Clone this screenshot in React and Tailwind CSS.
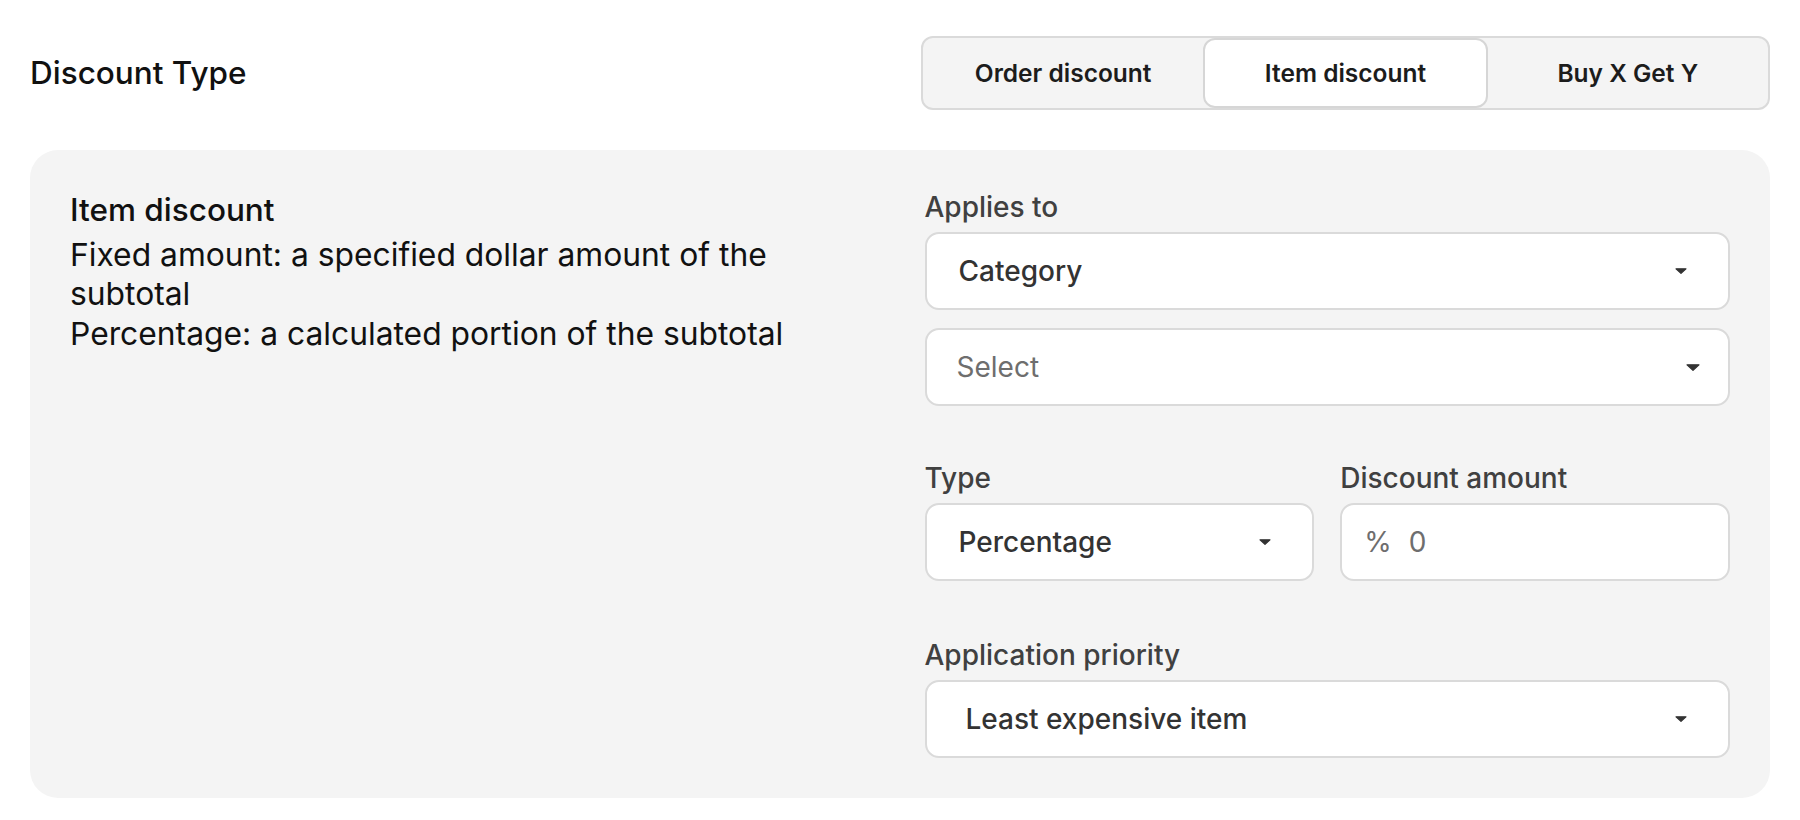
import React, { useState } from 'react';

const Caret = ({ w = 12, h = 6 }) => (
    <svg width={w} height={h} viewBox={`0 0 ${w} ${h}`} className="shrink-0">
        <path d={`M1 0.8 L${w - 1} 0.8 L${w / 2} ${h - 0.6} Z`} fill="#333333" stroke="#333333" strokeWidth="1.2" strokeLinejoin="round" />
    </svg>
);

const SelectBox = ({ value, placeholder, className = '', caret = 'sm' }) => (
    <div className={`flex h-[78px] items-center justify-between rounded-[14px] border-2 border-[#dadada] bg-white ${className}`}>
        {value ? (
            <span className="text-[28px] font-medium text-[#333333]">{value}</span>
        ) : (
            <span className="text-[28px] text-[#6e6e6e]">{placeholder}</span>
        )}
        {caret === 'sm' ? <Caret w={12} h={6} /> : <Caret w={14} h={7} />}
    </div>
);

const Label = ({ children }) => (
    <label className="mb-[8px] block text-[28px] font-medium leading-[34px] text-[#404040]">{children}</label>
);

const App = () => {
    const [tab, setTab] = useState('item');

    const tabs = [
        { id: 'order', label: 'Order discount' },
        { id: 'item', label: 'Item discount' },
        { id: 'bxgy', label: 'Buy X Get Y' },
    ];

    return (
        <div className="min-h-screen bg-white px-[30px] pt-[36px] font-['Inter',sans-serif] text-[#111111]">
            {/* Header */}
            <div className="flex items-center justify-between">
                <h2 className="text-[31.5px] font-medium">Discount Type</h2>
                <div className="flex h-[74px] w-[849px] rounded-[12px] border-2 border-[#dadada] bg-[#f4f4f4]">
                    {tabs.map((t) => (
                        <button
                            key={t.id}
                            onClick={() => setTab(t.id)}
                            className={`flex-1 text-[24.5px] font-semibold text-[#1c1c1c] ${
                                tab === t.id ? 'rounded-[12px] border-2 border-[#d6d6d6] bg-white' : ''
                            }`}
                        >
                            {t.label}
                        </button>
                    ))}
                </div>
            </div>

            {/* Panel */}
            <div className="mt-[40px] grid grid-cols-2 gap-x-[49px] rounded-[28px] bg-[#f4f4f4] p-[40px]">
                <div className="max-w-[760px] leading-[39.5px]">
                    <h3 className="text-[31.5px] font-medium">Item discount</h3>
                    <p className="mt-[5px] text-[31.8px]">Fixed amount: a specified dollar amount of the subtotal</p>
                    <p className="text-[31.8px]">Percentage: a calculated portion of the subtotal</p>
                </div>

                <div className="flex flex-col">
                    <Label>Applies to</Label>
                    <SelectBox value="Category" className="pl-[32px] pr-[41px]" />
                    <SelectBox placeholder="Select" caret="lg" className="mt-[18px] pl-[30px] pr-[28px]" />

                    <div className="mt-[55px] grid grid-cols-2 gap-x-[26px]">
                        <div>
                            <Label>Type</Label>
                            <SelectBox value="Percentage" className="pl-[32px] pr-[41px]" />
                        </div>
                        <div>
                            <Label>Discount amount</Label>
                            <div className="flex h-[78px] items-center gap-[17px] rounded-[14px] border-2 border-[#dadada] bg-white pl-[22px] text-[28px] text-[#6e6e6e]">
                                <span>%</span>
                                <span>0</span>
                            </div>
                        </div>
                    </div>

                    <div className="mt-[57px]">
                        <Label>Application priority</Label>
                        <SelectBox value="Least expensive item" className="pl-[39px] pr-[41px]" />
                    </div>
                </div>
            </div>
        </div>
    );
};

export default App;
